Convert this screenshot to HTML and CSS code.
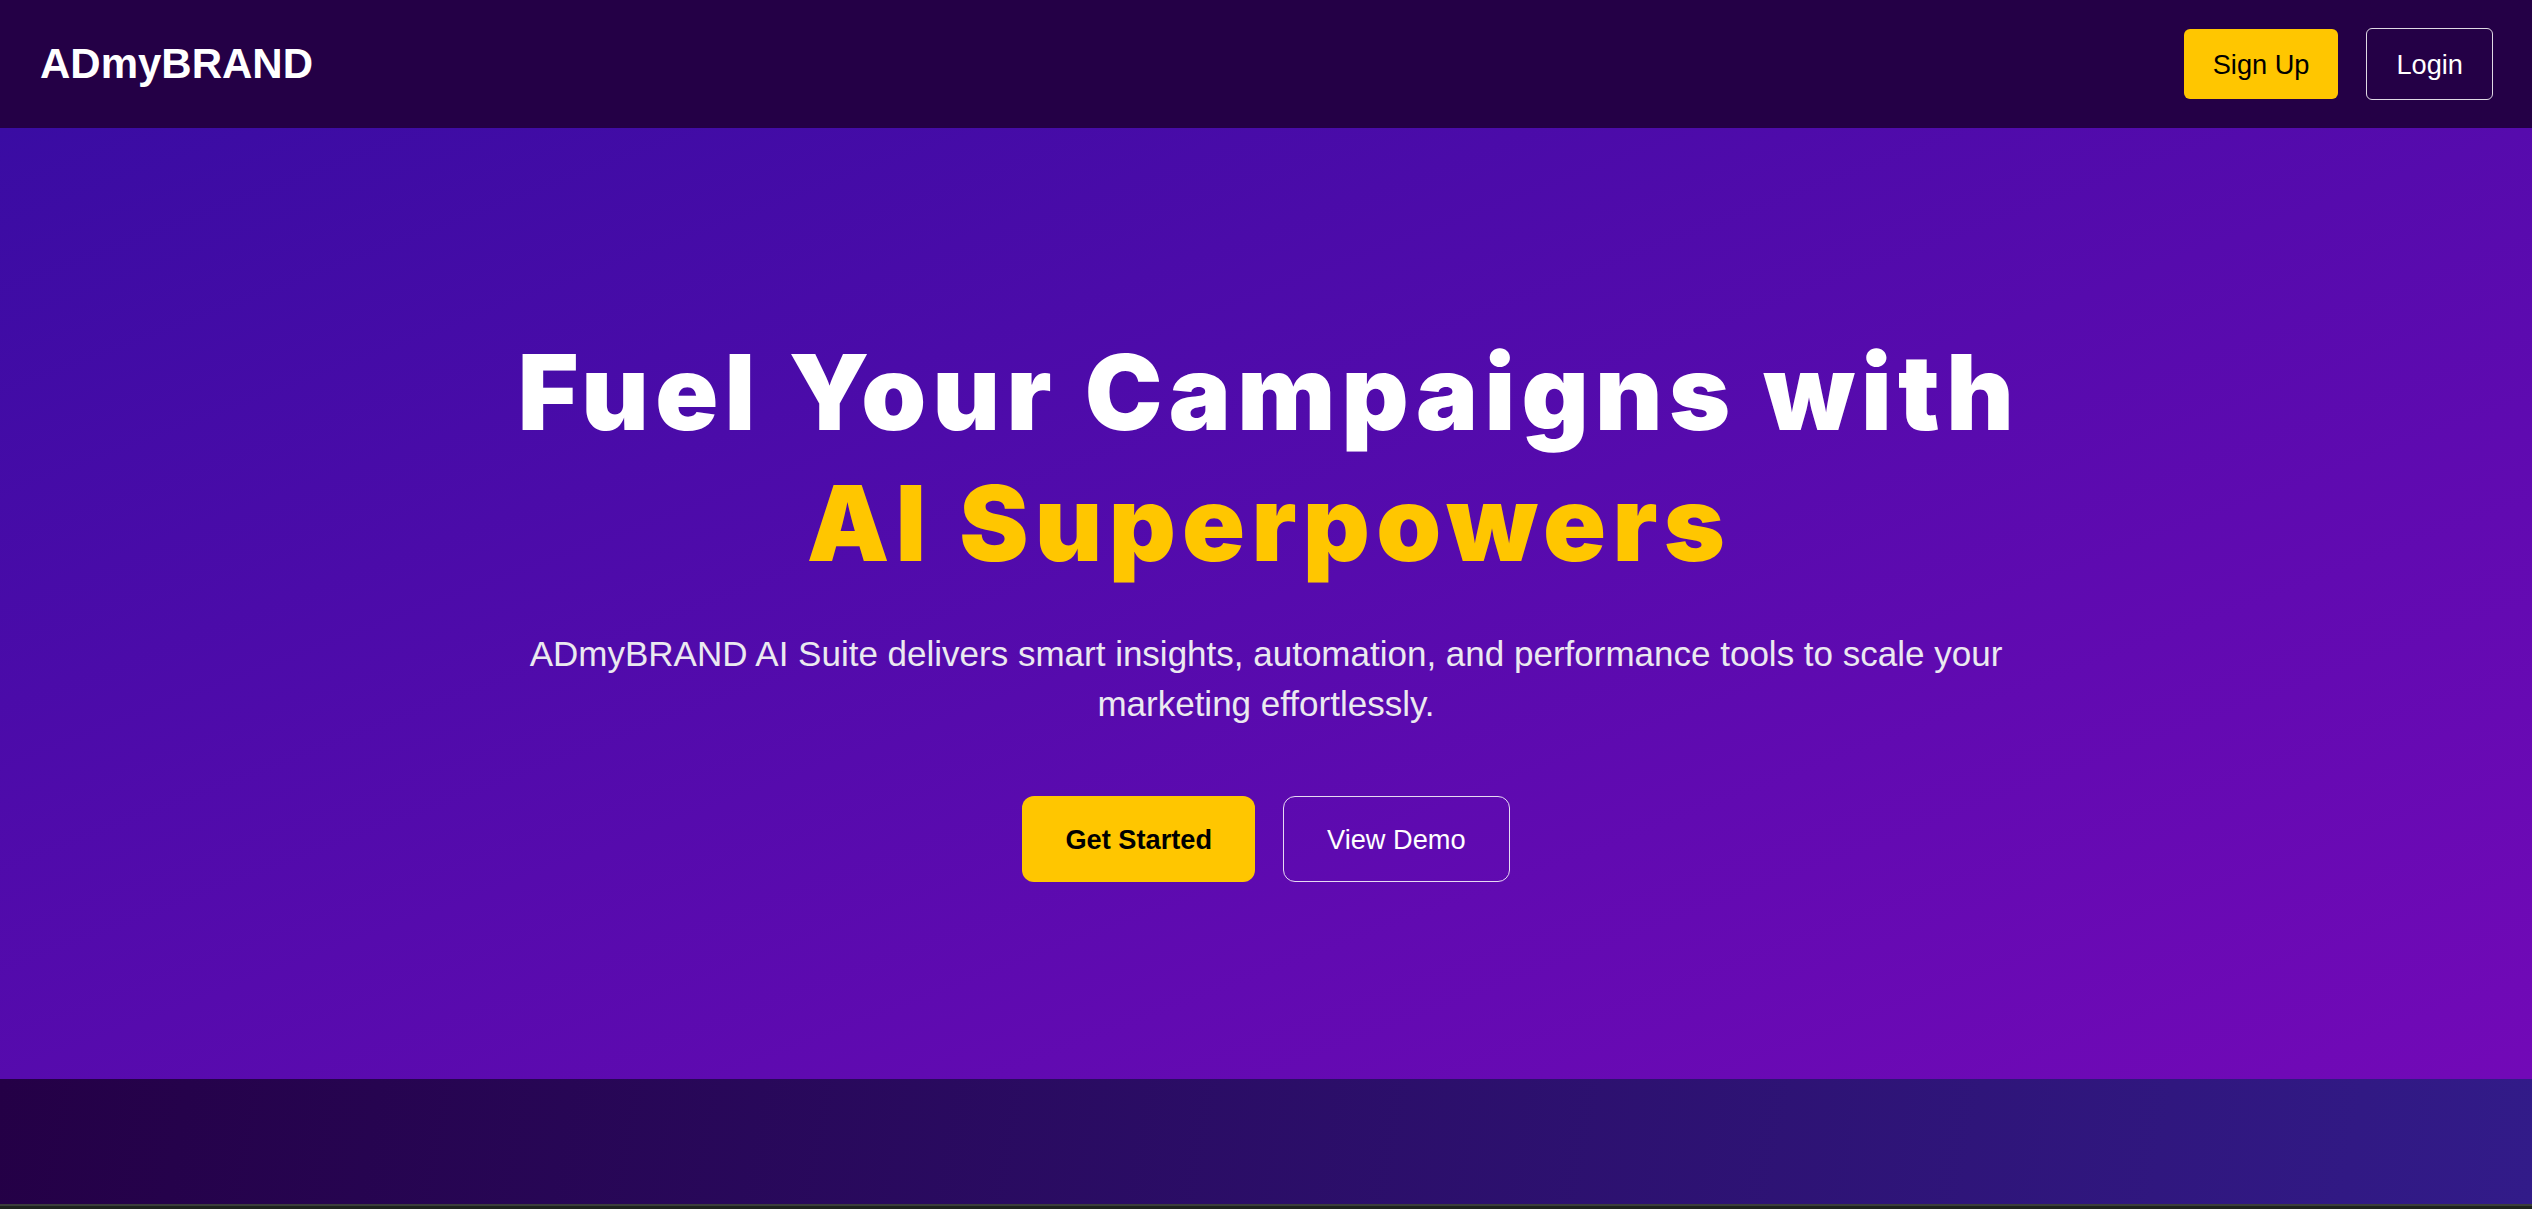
FILE: index.html
```html
<!DOCTYPE html>
<html lang="en">
<head>
<meta charset="utf-8">
<title>ADmyBRAND AI Suite</title>
<link rel="stylesheet" href="styles.css">
</head>
<body>
<header class="header">
  <div class="logo">ADmyBRAND</div>
  <nav class="nav">
    <a class="btn btn-yellow" href="#">Sign Up</a>
    <a class="btn btn-outline" href="#">Login</a>
  </nav>
</header>
<section class="hero">
  <h1 class="hero-title">Fuel Your Campaigns with <span class="accent">AI Superpowers</span></h1>
  <p class="hero-text">ADmyBRAND AI Suite delivers smart insights, automation, and performance tools to scale your marketing effortlessly.</p>
  <div class="hero-actions">
    <a class="cta cta-yellow" href="#">Get Started</a>
    <a class="cta cta-outline" href="#">View Demo</a>
  </div>
</section>
<section class="next"></section>
<div class="bottom-bar"></div>
</body>
</html>
```
FILE: styles.css
```css
* { box-sizing: border-box; }
html, body { margin: 0; padding: 0; }
body {
  font-family: "Liberation Sans", Arial, sans-serif;
  background: #1e221f;
}
a { text-decoration: none; }

.header {
  height: 128px;
  padding: 0 39px 0 40px;
  display: flex;
  align-items: center;
  justify-content: space-between;
  background: #240046;
}
.logo {
  color: #fff;
  font-weight: 700;
  font-size: 42px;
  line-height: 1;
}
.nav {
  display: flex;
  align-items: center;
  gap: 28px;
}
.btn {
  display: inline-block;
  font-size: 27.2px;
  line-height: 31px;
  padding: 19.5px 29px;
  border-radius: 6px;
}
.btn-yellow {
  background: #ffc600;
  color: #000;
}
.btn-outline {
  border: 1px solid rgba(255, 255, 255, 0.85);
  color: #fff;
}

.hero {
  height: 951px;
  display: flex;
  flex-direction: column;
  align-items: center;
  justify-content: center;
  text-align: center;
  background: linear-gradient(to bottom right, #3a0ca3, #7209b7);
}
.hero-title {
  margin: 2px 0 40px;
  padding-left: 6px;
  font-family: "Inter", "Liberation Sans", sans-serif;
  font-weight: 900;
  font-size: 104px;
  line-height: 131px;
  letter-spacing: 6.3px;
  color: #fff;
}
.accent {
  display: block;
  color: #ffc600;
}
.hero-text {
  margin: 0 0 67px;
  max-width: 1520px;
  font-size: 35px;
  line-height: 50px;
  color: #ebe9f0;
}
.hero-actions {
  display: flex;
  gap: 28px;
}
.cta {
  display: inline-block;
  font-size: 27.2px;
  line-height: 31px;
  padding: 27.5px 43px;
  border-radius: 12px;
}
.cta-yellow {
  background: #ffc600;
  color: #000;
  font-weight: 700;
}
.cta-outline {
  border: 1px solid rgba(255, 255, 255, 0.85);
  color: #fff;
  padding: 26.5px 43px;
}

.next {
  height: 125px;
  background: linear-gradient(100deg, #240046, #321b89);
}
.bottom-bar {
  height: 5px;
  border-top: 2px solid #3b3e3b;
  background: #1e221f;
}
```
